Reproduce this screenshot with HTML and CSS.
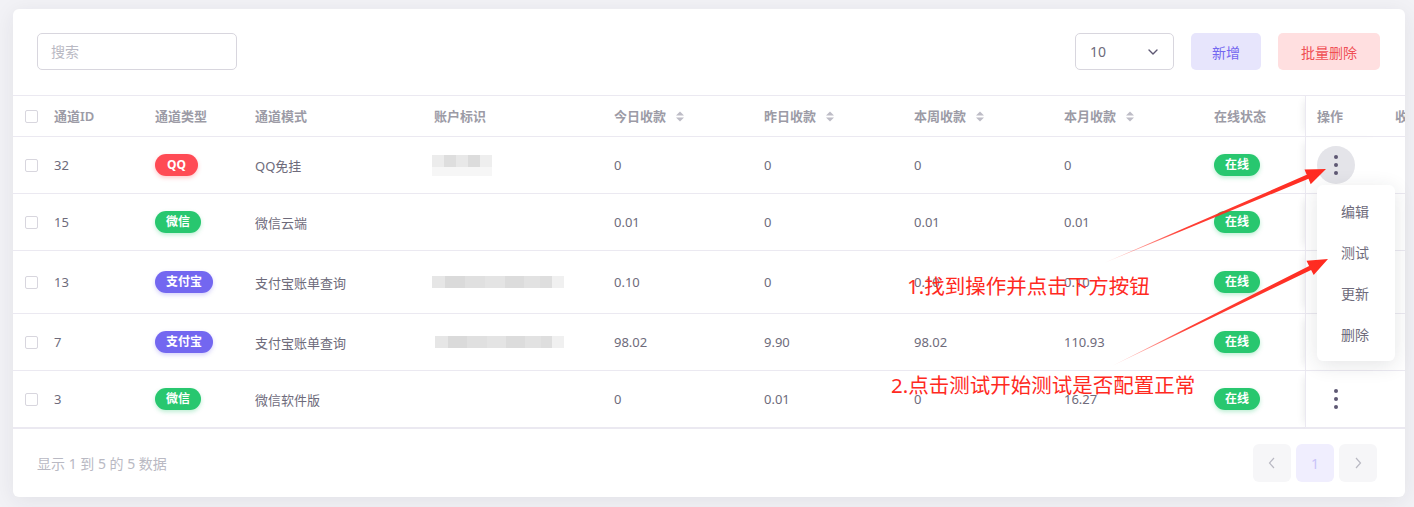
FILE: index.html
```html
<!DOCTYPE html>
<html lang="zh-CN">
<head>
<meta charset="utf-8">
<title>通道列表</title>
<link rel="stylesheet" href="styles.css">
</head>
<body>
<div class="page">
  <div class="card">
    <div class="toolbar">
      <div class="search">搜索</div>
      <div class="actions">
        <div class="select"><span>10</span>
          <svg class="chev" width="10" height="6" viewBox="0 0 10 6"><path d="M1 1l4 4 4-4" fill="none" stroke="#5e5873" stroke-width="1.4" stroke-linecap="round" stroke-linejoin="round"/></svg>
        </div>
        <div class="btn btn-add">新增</div>
        <div class="btn btn-del">批量删除</div>
      </div>
    </div>
    <div class="table-wrap">
      <table class="grid">
        <colgroup>
          <col class="w-cb"><col class="w-id"><col class="w-type"><col class="w-mode"><col class="w-acct">
          <col class="w-num"><col class="w-num"><col class="w-num"><col class="w-num">
          <col class="w-status"><col class="w-ops"><col class="w-extra">
        </colgroup>
        <thead>
          <tr>
            <th class="cb-cell"><span class="cb"></span></th>
            <th>通道ID</th>
            <th>通道类型</th>
            <th>通道模式</th>
            <th>账户标识</th>
            <th>今日收款<svg class="sort" width="10" height="11" viewBox="0 0 10 11"><path d="M5 0.5L9 4.5H1Z M5 10.5L1 6.5H9Z" fill="#bdbcc6"/></svg></th>
            <th>昨日收款<svg class="sort" width="10" height="11" viewBox="0 0 10 11"><path d="M5 0.5L9 4.5H1Z M5 10.5L1 6.5H9Z" fill="#bdbcc6"/></svg></th>
            <th>本周收款<svg class="sort" width="10" height="11" viewBox="0 0 10 11"><path d="M5 0.5L9 4.5H1Z M5 10.5L1 6.5H9Z" fill="#bdbcc6"/></svg></th>
            <th>本月收款<svg class="sort" width="10" height="11" viewBox="0 0 10 11"><path d="M5 0.5L9 4.5H1Z M5 10.5L1 6.5H9Z" fill="#bdbcc6"/></svg></th>
            <th>在线状态</th>
            <th class="ops">操作</th>
            <th>收款账户</th>
          </tr>
        </thead>
        <tbody>
          <tr>
            <td class="cb-cell"><span class="cb"></span></td>
            <td>32</td>
            <td><span class="badge b-red">QQ</span></td>
            <td>QQ免挂</td>
            <td><span class="blur blur-short"></span></td>
            <td>0</td><td>0</td><td>0</td><td>0</td>
            <td><span class="badge b-green">在线</span></td>
            <td class="ops"><span class="kebab active"><i></i><i></i><i></i></span></td>
            <td></td>
          </tr>
          <tr>
            <td class="cb-cell"><span class="cb"></span></td>
            <td>15</td>
            <td><span class="badge b-green">微信</span></td>
            <td>微信云端</td>
            <td></td>
            <td>0.01</td><td>0</td><td>0.01</td><td>0.01</td>
            <td><span class="badge b-green">在线</span></td>
            <td class="ops"></td>
            <td></td>
          </tr>
          <tr class="tall">
            <td class="cb-cell"><span class="cb"></span></td>
            <td>13</td>
            <td><span class="badge b-purple">支付宝</span></td>
            <td>支付宝账单查询</td>
            <td><span class="blur blur-long"></span></td>
            <td>0.10</td><td>0</td><td>0.10</td><td>0.10</td>
            <td><span class="badge b-green">在线</span></td>
            <td class="ops"></td>
            <td></td>
          </tr>
          <tr>
            <td class="cb-cell"><span class="cb"></span></td>
            <td>7</td>
            <td><span class="badge b-purple">支付宝</span></td>
            <td>支付宝账单查询</td>
            <td><span class="blur blur-long shift"></span></td>
            <td>98.02</td><td>9.90</td><td>98.02</td><td>110.93</td>
            <td><span class="badge b-green">在线</span></td>
            <td class="ops"></td>
            <td></td>
          </tr>
          <tr class="last">
            <td class="cb-cell"><span class="cb"></span></td>
            <td>3</td>
            <td><span class="badge b-green">微信</span></td>
            <td>微信软件版</td>
            <td></td>
            <td>0</td><td>0.01</td><td>0</td><td>16.27</td>
            <td><span class="badge b-green">在线</span></td>
            <td class="ops"><span class="kebab"><i></i><i></i><i></i></span></td>
            <td></td>
          </tr>
        </tbody>
      </table>
    </div>
    <div class="footer">
      <div class="info">显示 1 到 5 的 5 数据</div>
      <div class="pager">
        <span class="pg"><svg width="8" height="12" viewBox="0 0 8 12"><path d="M6 1L1.5 6 6 11" fill="none" stroke="#b9b9c3" stroke-width="1.2"/></svg></span>
        <span class="pg cur">1</span>
        <span class="pg"><svg width="8" height="12" viewBox="0 0 8 12"><path d="M2 1l4.5 5L2 11" fill="none" stroke="#b9b9c3" stroke-width="1.2"/></svg></span>
      </div>
    </div>
  </div>

  <div class="menu">
    <div class="mi">编辑</div>
    <div class="mi">测试</div>
    <div class="mi">更新</div>
    <div class="mi">删除</div>
  </div>

  <svg class="arrows" width="1414" height="507" viewBox="0 0 1414 507">
    <defs>
      <linearGradient id="g1" gradientUnits="userSpaceOnUse" x1="1104" y1="263" x2="1326" y2="169">
        <stop offset="0" stop-color="#ff2a1f" stop-opacity="0.15"/>
        <stop offset="0.35" stop-color="#ff2a1f" stop-opacity="0.9"/>
        <stop offset="1" stop-color="#ff2a1f"/>
      </linearGradient>
      <linearGradient id="g2" gradientUnits="userSpaceOnUse" x1="1112" y1="366" x2="1328" y2="259">
        <stop offset="0" stop-color="#ff2a1f" stop-opacity="0.15"/>
        <stop offset="0.35" stop-color="#ff2a1f" stop-opacity="0.9"/>
        <stop offset="1" stop-color="#ff2a1f"/>
      </linearGradient>
    </defs>
    <polygon fill="url(#g1)" points="1104,263 1306.7,174.8 1304.5,169.4 1326,169 1310.7,184.2 1308.5,178.8"/>
    <polygon fill="url(#g2)" points="1112,366 1309.1,265.9 1306.5,260.7 1328,259 1313.7,275.1 1311.1,269.9"/>
  </svg>
  <div class="note note1">1.找到操作并点击下方按钮</div>
  <div class="note note2">2.点击测试开始测试是否配置正常</div>
</div>
</body>
</html>
```

FILE: styles.css
```css
html, body {
  margin: 0;
  padding: 0;
}
body {
  background: #f2f2f6;
  font-family: "Noto Sans", "Noto Sans CJK SC", sans-serif;
  color: #6e6b7b;
}
.page {
  position: relative;
  width: 1414px;
  height: 507px;
  padding: 9px 9px 0 13px;
  box-sizing: border-box;
  overflow: hidden;
}
.card {
  width: 1392px;
  height: 488px;
  background: #fff;
  border-radius: 6px;
  box-shadow: 0 4px 22px rgba(34, 41, 47, 0.08);
  overflow: hidden;
  display: flex;
  flex-direction: column;
}
.toolbar {
  display: flex;
  align-items: center;
  padding: 24px 25px 25px 24px;
  flex: none;
}
.search {
  width: 200px;
  height: 37px;
  box-sizing: border-box;
  border: 1px solid #d8d6de;
  border-radius: 5px;
  padding-left: 13px;
  font-size: 14px;
  line-height: 35px;
  color: #b9b9c3;
}
.actions {
  margin-left: auto;
  display: flex;
  gap: 17px;
}
.select {
  width: 99px;
  height: 37px;
  box-sizing: border-box;
  border: 1px solid #d8d6de;
  border-radius: 5px;
  padding: 0 15px 0 14px;
  display: flex;
  align-items: center;
  justify-content: space-between;
  font-size: 14px;
  color: #6e6b7b;
}
.btn {
  height: 37px;
  border-radius: 5px;
  font-size: 14px;
  display: flex;
  align-items: center;
  justify-content: center;
}
.btn-add {
  width: 70px;
  background: #e7e5fc;
  color: #7367f0;
}
.btn-del {
  width: 102px;
  background: #ffdfe0;
  color: #f04f55;
}
.table-wrap {
  overflow: hidden;
  flex: none;
}
.grid {
  width: 1522px;
  table-layout: fixed;
  border-collapse: separate;
  border-spacing: 0;
  font-size: 13px;
}
.w-cb { width: 31px; }
.w-id { width: 101px; }
.w-type { width: 100px; }
.w-mode { width: 179px; }
.w-acct { width: 180px; }
.w-num { width: 150px; }
.w-status { width: 101px; }
.w-ops { width: 80px; }
.w-extra { width: 150px; }
.grid th {
  height: 41px;
  padding: 0 10px 1px;
  text-align: left;
  font-weight: 600;
  color: #9c9ba6;
  border-top: 1px solid #ebe9f1;
  border-bottom: 1px solid #ebe9f1;
  white-space: nowrap;
  box-sizing: border-box;
}
.grid td {
  height: 57px;
  padding: 0 10px;
  border-bottom: 1px solid #ebe9f1;
  color: #6e6b7b;
  white-space: nowrap;
  box-sizing: border-box;
}
.grid thead th {
  height: 42px;
}
.grid tr.tall td {
  height: 63px;
}
.grid tr.last td {
  height: 58px;
  border-bottom: 2px solid #ebe9f1;
}
.grid .cb-cell {
  padding: 0 0 0 12px;
}
.cb {
  display: block;
  width: 13px;
  height: 13px;
  box-sizing: border-box;
  border: 1px solid #d8d6de;
  border-radius: 2px;
}
.sort {
  margin-left: 9px;
  vertical-align: -1px;
}
.grid .ops {
  padding-left: 11px;
  border-left: 1px solid #ebe9f1;
  box-shadow: -6px 0 8px -6px rgba(34, 41, 47, 0.12);
}
.badge {
  display: inline-block;
  height: 22px;
  line-height: 22px;
  padding: 0 11px;
  border-radius: 11px;
  font-size: 12px;
  font-weight: 700;
  color: #fff;
  vertical-align: middle;
}
.b-red {
  background: #ff4b55;
  padding: 0 12px;
  box-shadow: 0 2px 4px rgba(255, 75, 85, 0.3);
}
.b-green {
  background: #28c76f;
  box-shadow: 0 2px 4px rgba(40, 199, 111, 0.3);
}
.b-purple {
  background: #7367f0;
  box-shadow: 0 2px 4px rgba(115, 103, 240, 0.3);
}
.blur {
  display: block;
  margin-left: -2px;
}
.blur-short {
  width: 60px;
  height: 21px;
  background:
    linear-gradient(to bottom, transparent 0 55%, #f6f6f6 55% 100%),
    linear-gradient(to right, #ececec 0 20%, #dedede 20% 40%, #e8e8e8 40% 60%, #dcdcdc 60% 80%, #eeeeee 80% 100%);
}
.blur-long {
  width: 132px;
  height: 12px;
  background: linear-gradient(to right, #e6e6e6 0 10%, #dadada 10% 25%, #e0e0e0 25% 40%, #e4e4e4 40% 55%, #dcdcdc 55% 70%, #e2e2e2 70% 82%, #dedede 82% 91%, #f0f0f0 91% 100%);
}
.blur.shift {
  margin-left: 1px;
  width: 129px;
}
.kebab {
  width: 38px;
  height: 38px;
  border-radius: 50%;
  display: flex;
  flex-direction: column;
  align-items: center;
  justify-content: center;
  gap: 4px;
}
.kebab.active {
  background: #e4e4e9;
}
.kebab i {
  display: block;
  width: 4px;
  height: 4px;
  border-radius: 50%;
  background: #5e5873;
}
.footer {
  flex: 1;
  display: flex;
  align-items: center;
  justify-content: space-between;
  padding: 0 28px 0 24px;
}
.info {
  font-size: 14px;
  color: #b9b9c3;
}
.pager {
  display: flex;
  gap: 5px;
}
.pg {
  width: 38px;
  height: 38px;
  border-radius: 6px;
  background: #f6f6f8;
  display: flex;
  align-items: center;
  justify-content: center;
  font-size: 14px;
}
.pg.cur {
  background: #f0eefe;
  color: #c9c4f8;
}
.menu {
  position: absolute;
  left: 1317px;
  top: 185px;
  width: 78px;
  padding: 6px 0;
  background: #fff;
  border-radius: 6px;
  box-shadow: 0 4px 20px rgba(34, 41, 47, 0.12);
}
.mi {
  height: 41px;
  line-height: 41px;
  padding-left: 24px;
  font-size: 14px;
  color: #6e6b7b;
}
.arrows {
  position: absolute;
  left: 0;
  top: 0;
  pointer-events: none;
}
.note {
  position: absolute;
  font-size: 20.5px;
  line-height: 20px;
  color: #ff2a1f;
  white-space: nowrap;
  font-family: "Noto Sans", "Noto Sans CJK SC", sans-serif;
}
.note1 {
  left: 907px;
  top: 276px;
}
.note2 {
  left: 891px;
  top: 375px;
}
```
